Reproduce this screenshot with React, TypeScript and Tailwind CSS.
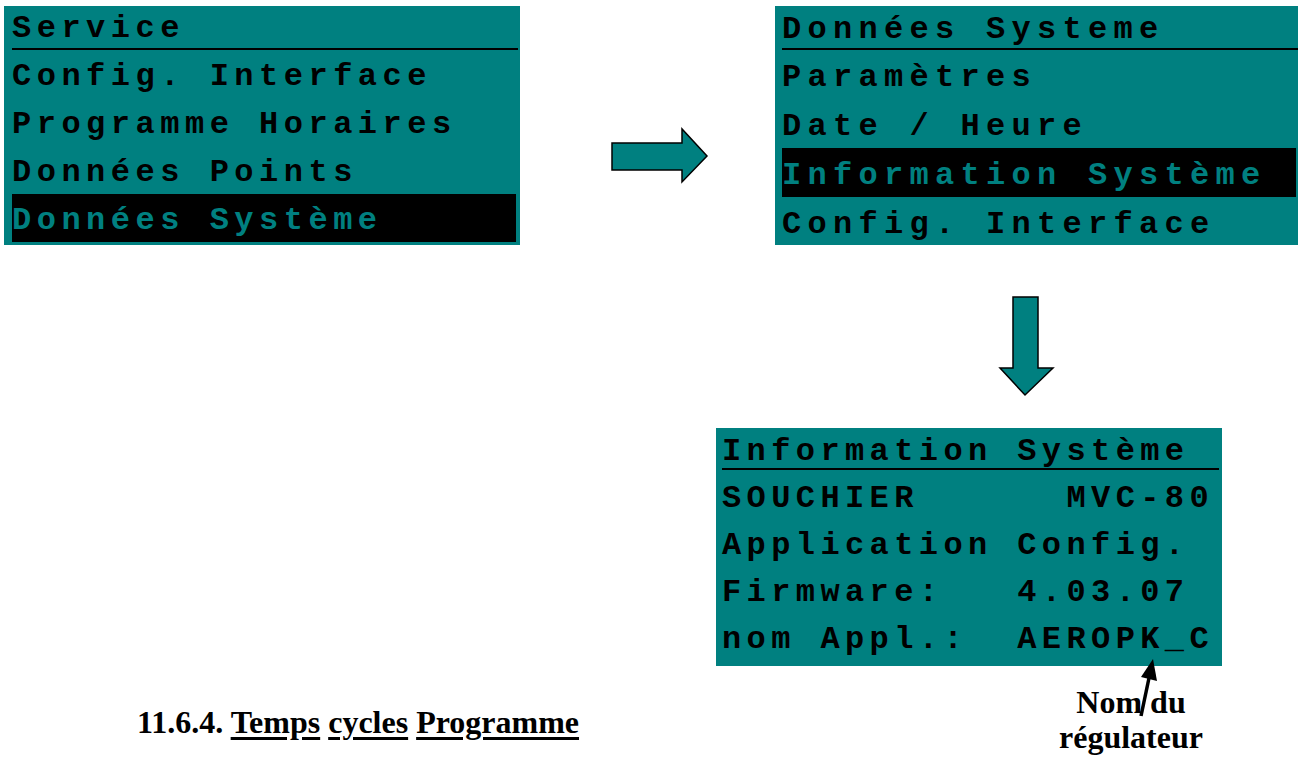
const TEAL = "#008080";

type PanelProps = {
  title: string;
  rows: string[];
  selected?: number;
  className: string;
  track: string;
  headH: string;
  headLead: string;
  rowH: string;
  rowLead: string;
  pad: string;
};

function Panel({ title, rows, selected, className, track, headH, headLead, rowH, rowLead, pad }: PanelProps) {
  return (
    <div className={`bg-[#008080] font-['Liberation_Mono',monospace] font-bold text-[32px] text-black whitespace-pre ${track} ${pad} ${className}`}>
      <div className={`${headH} ${headLead} overflow-visible`}>{title}</div>
      <div className="h-[2px] bg-black" />
      {rows.map((r, i) => (
        <div
          key={i}
          className={`${rowH} ${rowLead} overflow-visible ${i === selected ? "mr-[2px] bg-black text-[#008080]" : ""}`}
        >
          {r}
        </div>
      ))}
    </div>
  );
}

export default function App() {
  return (
    <div className="relative w-[1298px] h-[761px] overflow-hidden bg-white">
      {/* top row: two menus and the arrow between */}
      <div className="flex items-start pt-[6px]">
        <Panel
          className="ml-[4px] w-[516px] h-[239px]"
          track="tracking-[5.5px]"
          pad="pl-[8px] pr-[2px]"
          headH="h-[42px]"
          headLead="leading-[45px]"
          rowH="h-[48px]"
          rowLead="leading-[53px]"
          title="Service"
          rows={["Config. Interface", "Programme Horaires", "Données Points", "Données Système"]}
          selected={3}
        />
        <svg className="ml-[90px] mt-[121px] shrink-0" width="100" height="58" viewBox="0 0 100 58">
          <polygon
            points="2,16 72,16 72,2 97,29 72,55 72,43 2,43"
            fill={TEAL}
            stroke="#000"
            strokeWidth="1.5"
          />
        </svg>
        <Panel
          className="ml-[65px] flex-1 h-[239px]"
          track="tracking-[6.3px]"
          pad="pl-[7px] pr-0"
          headH="h-[42px]"
          headLead="leading-[47px]"
          rowH="h-[49px]"
          rowLead="leading-[55px]"
          title="Données Systeme"
          rows={["Paramètres", "Date / Heure", "Information Système", "Config. Interface"]}
          selected={2}
        />
      </div>

      <svg className="block ml-[998px] mt-[50px]" width="58" height="103" viewBox="0 0 58 103">
        <polygon
          points="15,2 40,2 40,73 55,73 27,100 2,73 15,73"
          fill={TEAL}
          stroke="#000"
          strokeWidth="1.5"
        />
      </svg>

      <Panel
        className="ml-[716px] mt-[30px] w-[506px] h-[238px]"
        track="tracking-[5.4px]"
        pad="pl-[6px] pr-[3px]"
        headH="h-[40px]"
        headLead="leading-[47px]"
        rowH="h-[47px]"
        rowLead="leading-[57px]"
        title="Information Système"
        rows={["SOUCHIER      MVC-80", "Application Config.", "Firmware:   4.03.07", "nom Appl.:  AEROPK_C"]}
      />

      {/* bottom: section title and annotation */}
      <div className="flex items-start font-['Liberation_Serif',serif] font-bold text-[32px] text-black">
        <div className="ml-[137px] mt-[38px] leading-[36px] whitespace-nowrap">
          11.6.4.{" "}
          <span className="underline decoration-[2.5px] underline-offset-[4px]">Temps</span>{" "}
          <span className="underline decoration-[2.5px] underline-offset-[4px]">cycles</span>{" "}
          <span className="underline decoration-[2.5px] underline-offset-[4px]">Programme</span>
        </div>
        <div className="ml-auto mr-[87px] mt-[19px] w-[160px] text-center leading-[35px]">
          Nom du
          <br />
          régulateur
        </div>
      </div>

      {/* annotation pointer */}
      <svg className="absolute left-0 top-0 pointer-events-none" width="1298" height="761">
        <line x1="1141" y1="716" x2="1149" y2="678" stroke="#000" strokeWidth="3.5" />
        <polygon points="1153,659 1157,681 1141,677" fill="#000" />
      </svg>
    </div>
  );
}
